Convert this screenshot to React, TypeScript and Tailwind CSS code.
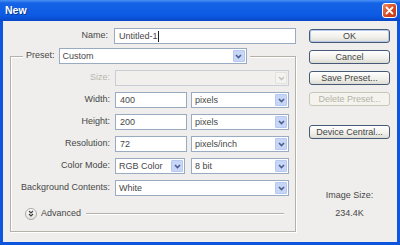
import React from "react";

const Chevron = ({ color = "#4a5d8c" }: { color?: string }) => (
  <svg width="7" height="5" viewBox="0 0 7 5">
    <path d="M1 1 L3.5 3.5 L6 1" fill="none" stroke={color} strokeWidth="1.6" />
  </svg>
);

const Select = ({ value, width, disabled = false }: { value: string; width: string; disabled?: boolean }) => (
  <div
    className={`${width} h-[16px] flex items-center border ${
      disabled ? "border-[#c9ced6] bg-[#f1f0ec]" : "border-[#98abc2] bg-white"
    }`}
  >
    <span className="flex-1 pl-[3px] leading-none truncate">{value}</span>
    <span
      className={`w-[12px] h-[12px] mr-[1px] flex items-center justify-center rounded-[1px] border ${
        disabled ? "border-[#e2e2de] bg-[#f3f3f0]" : "border-[#b6c8ef] bg-[#c7d6f7]"
      }`}
    >
      <Chevron color={disabled ? "#c5c5c0" : "#4a5d8c"} />
    </span>
  </div>
);

const Input = ({ value, width, caret = false }: { value: string; width: string; caret?: boolean }) => (
  <div className={`${width} h-[16px] flex items-center border border-[#98abc2] bg-white pl-[4px] leading-none`}>
    <span>{value}</span>
    {caret && <span className="w-px h-[11px] bg-[#222]" />}
  </div>
);

const Button = ({ label, disabled = false, primary = false }: { label: string; disabled?: boolean; primary?: boolean }) => (
  <div
    className={`w-[81px] h-[14px] flex items-center justify-center rounded-[3px] border leading-none ${
      disabled
        ? "border-[#c9c7ba] bg-[#f4f3ee] text-[#b4b2a6]"
        : "border-[#465a78] bg-[linear-gradient(to_bottom,#ffffff,#f0efea_60%,#dcdbd3)] text-[#444]"
    } ${primary ? "shadow-[inset_0_0_0_1px_#b4c8ee]" : ""}`}
  >
    {label}
  </div>
);

const Row = ({ label, children, muted = false }: { label: string; children: React.ReactNode; muted?: boolean }) => (
  <div className="flex items-center h-[16px]">
    <span className={`w-[100px] text-right pr-[1px] ${muted ? "text-[#b8b6ad]" : ""}`}>{label}</span>
    <div className="ml-[4px] flex items-center gap-[4px]">{children}</div>
  </div>
);

export default function App() {
  return (
    <div className="w-[400px] h-[245px] flex flex-col bg-[#0d55dc] font-['Liberation_Sans',Arial,sans-serif] text-[9px] text-[#474747] overflow-hidden">
      {/* title bar */}
      <div className="h-[21px] flex items-center justify-between pl-[5px] pr-[3px] bg-[linear-gradient(to_bottom,#4a92f5_0%,#1563e6_14%,#0b5ae2_75%,#0847c6_100%)]">
        <span className="text-white font-bold text-[10.5px] leading-none [text-shadow:1px_1px_0_#0a3a9a]">New</span>
        <div className="w-[15px] h-[15px] rounded-[3px] border border-white bg-[linear-gradient(135deg,#ee8a5e,#d6491f_55%,#c33a14)] flex items-center justify-center">
          <svg width="9" height="9" viewBox="0 0 9 9">
            <path d="M1.5 1.5 L7.5 7.5 M7.5 1.5 L1.5 7.5" stroke="#fff" strokeWidth="1.8" strokeLinecap="round" />
          </svg>
        </div>
      </div>

      {/* body */}
      <div className="flex-1 mx-[3px] mb-[3px] bg-[#efeeec] flex">
        <div className="w-[293px] flex flex-col">
          <div className="mt-[7px] flex items-center h-[16px]">
            <span className="w-[107px] text-right">Name:</span>
            <div className="ml-[6px]">
              <Input value="Untitled-1" width="w-[182px]" caret />
            </div>
          </div>

          <fieldset className="mt-[4px] ml-[7px] w-[286px] border border-[#b3b1a8] shadow-[1px_1px_0_#ffffff,inset_1px_1px_0_#ffffff] pt-[6px] pb-[11px]">
            <legend className="ml-[12px] px-[3px] bg-[#efeeec]">
              <div className="flex items-center h-[16px]">
                <span>Preset:</span>
                <div className="ml-[4px]">
                  <Select value="Custom" width="w-[188px]" />
                </div>
              </div>
            </legend>

            <div className="flex flex-col gap-[6px]">
              <Row label="Size:" muted>
                <Select value="" width="w-[174px]" disabled />
              </Row>
              <Row label="Width:">
                <Input value="400" width="w-[72px]" />
                <Select value="pixels" width="w-[98px]" />
              </Row>
              <Row label="Height:">
                <Input value="200" width="w-[72px]" />
                <Select value="pixels" width="w-[98px]" />
              </Row>
              <Row label="Resolution:">
                <Input value="72" width="w-[72px]" />
                <Select value="pixels/inch" width="w-[98px]" />
              </Row>
              <Row label="Color Mode:">
                <Select value="RGB Color" width="w-[70px]" />
                <div className="ml-[2px]">
                  <Select value="8 bit" width="w-[98px]" />
                </div>
              </Row>
              <Row label="Background Contents:">
                <Select value="White" width="w-[174px]" />
              </Row>
            </div>

            <div className="mt-[11px] ml-[14px] mr-[11px] flex items-center h-[13px]">
              <span className="w-[12px] h-[12px] rounded-full border border-[#a9a9a4] bg-[linear-gradient(to_bottom,#ffffff,#e4e3de)] flex items-center justify-center">
                <svg width="6" height="7" viewBox="0 0 6 7">
                  <path d="M1 1 L3 3 L5 1 M1 4 L3 6 L5 4" fill="none" stroke="#3c3c3c" strokeWidth="1.1" />
                </svg>
              </span>
              <span className="ml-[4px]">Advanced</span>
              <span className="ml-[5px] flex-1 h-px bg-[#b3b1a8] shadow-[0_1px_0_#ffffff]" />
            </div>
          </fieldset>
        </div>

        <div className="flex-1 flex flex-col pl-[13px]">
          <div className="mt-[8px] flex flex-col gap-[7px]">
            <Button label="OK" primary />
            <Button label="Cancel" />
            <Button label="Save Preset..." />
            <Button label="Delete Preset..." disabled />
          </div>
          <div className="mt-[19px]">
            <Button label="Device Central..." />
          </div>
          <div className="w-[81px] mt-[51px] flex flex-col items-center leading-[10px]">
            <span>Image Size:</span>
            <span className="mt-[8px]">234.4K</span>
          </div>
        </div>
      </div>
    </div>
  );
}
